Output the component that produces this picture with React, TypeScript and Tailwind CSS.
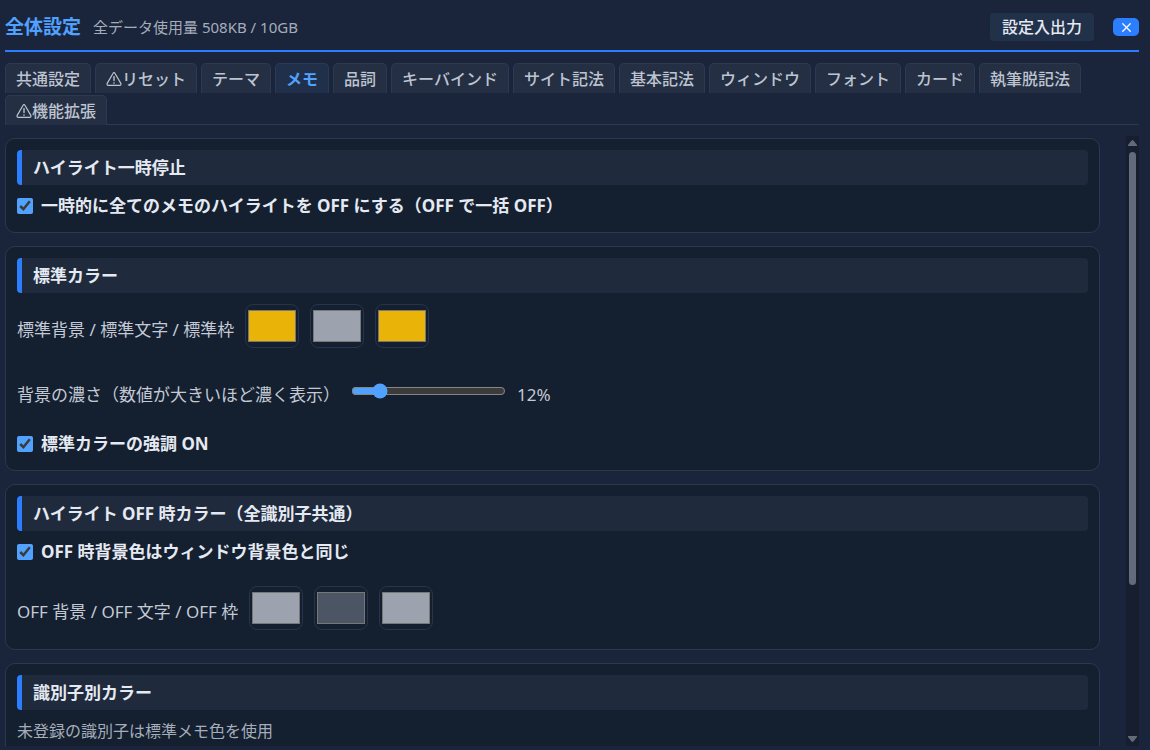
import { useEffect, useRef, useState } from "react";
import type { ReactNode } from "react";
import { X } from "lucide-react";

interface Tab {
  id: string;
  label: string;
  warn?: boolean;
}

const TABS: Tab[] = [
  { id: "common", label: "共通設定" },
  { id: "reset", label: "リセット", warn: true },
  { id: "theme", label: "テーマ" },
  { id: "memo", label: "メモ" },
  { id: "pos", label: "品詞" },
  { id: "keybind", label: "キーバインド" },
  { id: "site", label: "サイト記法" },
  { id: "basic", label: "基本記法" },
  { id: "window", label: "ウィンドウ" },
  { id: "font", label: "フォント" },
  { id: "card", label: "カード" },
  { id: "escape", label: "執筆脱記法" },
  { id: "extension", label: "機能拡張", warn: true },
];

const WarnIcon = () => (
  <svg
    width="16"
    height="16"
    viewBox="0 0 16 16"
    fill="none"
    stroke="currentColor"
    strokeLinejoin="round"
    strokeLinecap="round"
    aria-hidden="true"
  >
    <path d="M7.1 2.2 1.2 12.4c-.5.9 0 1.9 1 1.9h11.6c1 0 1.5-1 1-1.9L8.9 2.2c-.4-.8-1.4-.8-1.8 0z" strokeWidth="1.2" />
    <path d="M8 5.6v4" strokeWidth="1.4" />
    <path d="M8 12v.1" strokeWidth="1.6" />
  </svg>
);

const Card = ({ title, children }: { title: string; children: ReactNode }) => (
  <section className="rounded-[10px] border border-[#2b394f] bg-[#141f2f] px-[11px] pt-[11px] pb-[14px]">
    <h2 className="mb-[9px] rounded-sm border-l-[5px] border-blue-500 bg-[#1f2b3d] px-[11px] py-[5px] text-[17px] leading-[25px] font-bold text-[#e5e9f2]">
      {title}
    </h2>
    <div className="flex flex-col gap-5">{children}</div>
  </section>
);

const Check = ({ label }: { label: string }) => {
  const [checked, setChecked] = useState(true);
  return (
    <label className="flex items-center gap-2 text-[17px] leading-6 font-bold text-[#e5e9f2]">
      <input
        type="checkbox"
        checked={checked}
        onChange={(e) => setChecked(e.target.checked)}
        className="size-4 accent-blue-400"
      />
      {label}
    </label>
  );
};

const ColorRow = ({
  label,
  names,
  colors,
}: {
  label: string;
  names: string[];
  colors: string[];
}) => (
  <div className="mt-[2px] mb-[5px] flex items-end gap-[11px]">
    <span className="text-[17px] leading-9 text-[#c3cad5]">{label}</span>
    {colors.map((color, i) => (
      <input
        key={names[i]}
        type="color"
        defaultValue={color}
        aria-label={names[i]}
        className="h-11 w-[54px] rounded-lg border border-[#26354b] py-px"
      />
    ))}
  </div>
);

const ScrollBar = ({ top, size }: { top: number; size: number }) => (
  <div className="flex w-[13px] flex-col items-center bg-[#161e2f] text-[#626b7b]" aria-hidden="true">
    <svg width="13" height="16" viewBox="0 0 13 16" fill="currentColor">
      <path d="M5.6 4.4q.9-.9 1.8 0L11 9v1H2V9z" />
    </svg>
    <div className="w-[7px] flex-1">
      <div style={{ height: `${top}%` }} />
      <div className="rounded-full bg-[#626b7b]" style={{ height: `${size}%` }} />
    </div>
    <svg width="13" height="16" viewBox="0 0 13 16" fill="currentColor">
      <path d="M5.6 11.6q.9.9 1.8 0L11 7V6H2v1z" />
    </svg>
  </div>
);

export default function App() {
  const [active, setActive] = useState("memo");
  const [depth, setDepth] = useState(12);
  const [thumb, setThumb] = useState({ top: 0, size: 68 });
  const listRef = useRef<HTMLDivElement>(null);

  const updateThumb = () => {
    const el = listRef.current;
    if (!el) return;
    setThumb({
      top: (el.scrollTop / el.scrollHeight) * 100,
      size: (el.clientHeight / el.scrollHeight) * 100,
    });
  };

  useEffect(() => {
    updateThumb();
    window.addEventListener("resize", updateThumb);
    return () => window.removeEventListener("resize", updateThumb);
  }, []);

  return (
    <div
      lang="ja"
      className="flex h-screen flex-col bg-[#1a253c] pt-1 pr-[11px] pb-1 pl-[5px] font-['Noto_Sans','Noto_Sans_CJK_JP',sans-serif] scheme-dark"
    >
      <header className="flex h-12 shrink-0 items-center border-b-2 border-blue-500">
        <h1 className="text-[19px] leading-7 font-bold text-blue-400">全体設定</h1>
        <span className="ml-3 text-[15px] leading-6 text-[#a5adba]">全データ使用量 508KB / 10GB</span>
        <button
          type="button"
          className="ml-auto rounded-sm bg-[#22314a] px-3 py-[2px] text-base leading-6 font-medium text-[#e5e9f2]"
        >
          設定入出力
        </button>
        <button
          type="button"
          aria-label="閉じる"
          className="ml-[19px] flex h-[18px] w-[26px] items-center justify-center rounded-[5px] bg-blue-500 text-white"
        >
          <X size={15} strokeWidth={2} />
        </button>
      </header>

      <nav className="mt-[11px] flex shrink-0 flex-wrap gap-x-1 gap-y-[3px] border-b border-[#2d394e]">
        {TABS.map((tab) => (
          <button
            key={tab.id}
            type="button"
            onClick={() => setActive(tab.id)}
            className={`-mb-px flex items-center rounded-t-[5px] border border-b-0 px-[10px] pt-[3px] pb-[2px] text-base leading-6 ${
              tab.id === active
                ? "border-[#2a3a55] bg-[#21304a] font-bold text-blue-400"
                : "border-[#2d394e] bg-[#242f44] font-medium text-[#bdc4d0]"
            }`}
          >
            {tab.warn && <WarnIcon />}
            {tab.label}
          </button>
        ))}
      </nav>

      <div className="mt-[11px] flex min-h-0 flex-1">
        <div
          ref={listRef}
          onScroll={updateThumb}
          className="flex-1 overflow-y-auto pt-[2px] pr-[26px] [scrollbar-width:none]"
        >
          <div className="flex flex-col gap-[13px]">
            <Card title="ハイライト一時停止">
              <Check label="一時的に全てのメモのハイライトを OFF にする（OFF で一括 OFF）" />
            </Card>

            <Card title="標準カラー">
              <ColorRow
                label="標準背景 / 標準文字 / 標準枠"
                names={["標準背景", "標準文字", "標準枠"]}
                colors={["#eab308", "#9ca3af", "#eab308"]}
              />
              <div className="mt-[2px] mb-[5px] flex items-end gap-[11px] text-[17px] leading-6 text-[#c3cad5]">
                <label htmlFor="depth">背景の濃さ（数値が大きいほど濃く表示）</label>
                <input
                  id="depth"
                  type="range"
                  min={0}
                  max={80}
                  value={depth}
                  onChange={(e) => setDepth(Number(e.target.value))}
                  className="h-8 w-[155px] accent-blue-400"
                />
                <span>{depth}%</span>
              </div>
              <Check label="標準カラーの強調 ON" />
            </Card>

            <Card title="ハイライト OFF 時カラー（全識別子共通）">
              <Check label="OFF 時背景色はウィンドウ背景色と同じ" />
              <ColorRow
                label="OFF 背景 / OFF 文字 / OFF 枠"
                names={["OFF 背景", "OFF 文字", "OFF 枠"]}
                colors={["#9ca3af", "#4b5563", "#9ca3af"]}
              />
            </Card>

            <Card title="識別子別カラー">
              <p className="pb-48 text-base leading-6 text-[#a5adba]">未登録の識別子は標準メモ色を使用</p>
            </Card>
          </div>
        </div>
        <ScrollBar top={thumb.top} size={thumb.size} />
      </div>
    </div>
  );
}
